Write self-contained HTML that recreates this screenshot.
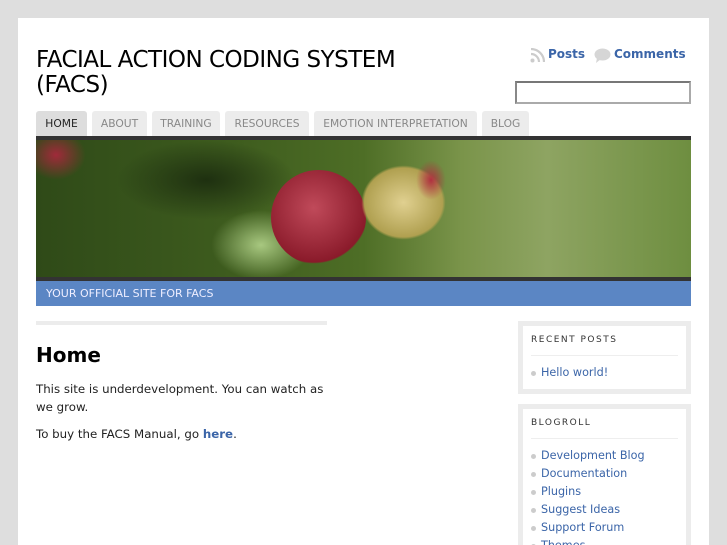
<!DOCTYPE html>
<html style="height:545px;overflow:hidden"><head><style>
*{margin:0;padding:0;box-sizing:border-box}
body{width:727px;height:545px;background:#dedede;font-family:"DejaVu Sans","Liberation Sans",sans-serif;overflow:hidden;position:relative}
#wrap{position:absolute;left:18px;top:18px;width:691px;height:527px;background:#fff}
.a{position:absolute}
h1{position:absolute;left:36px;top:48px;font-size:23px;font-weight:normal;line-height:25px;color:#000;letter-spacing:-0.5px;font-family:"DejaVu Sans",sans-serif}
.tab{position:absolute;top:111px;height:25px;background:#ececec;color:#888;font-size:10.7px;line-height:25px;text-align:center;border-radius:3px 3px 0 0}
a{color:#3b65a8;text-decoration:none}
.box{position:absolute;left:518px;width:173px;border:5px solid #ececec;background:#fff}
.box h3{font-size:9px;letter-spacing:1.5px;font-weight:normal;color:#333;margin:9px 8px 0;padding-bottom:10px;border-bottom:1px solid #eee}
.box ul{list-style:none;margin:8px 8px 0}
.box li{font-size:11.2px;line-height:18px;padding-left:10px;position:relative}
.box li:before{content:"";position:absolute;left:0;top:7px;width:5px;height:5px;border-radius:50%;background:#ccc}
</style></head><body>
<div id="wrap"></div>
<h1>FACIAL ACTION CODING SYSTEM<br>(FACS)</h1>
<svg class="a" style="left:530px;top:48px" width="15" height="15" viewBox="0 0 15 15"><circle cx="2.5" cy="12.5" r="2" fill="#ccc"/><path d="M1 6a8 8 0 0 1 8 8M1 1a13 13 0 0 1 13 13" stroke="#ccc" stroke-width="2.2" fill="none"/></svg>
<a class="a" style="left:548px;top:47px;font-size:12px;font-weight:bold">Posts</a>
<svg class="a" style="left:594px;top:48px" width="17" height="15" viewBox="0 0 17 15"><ellipse cx="8.5" cy="6.5" rx="8" ry="6" fill="#d6d6d6"/><path d="M3 10L2 15L7 11Z" fill="#d6d6d6"/></svg>
<a class="a" style="left:614px;top:47px;font-size:12px;font-weight:bold">Comments</a>
<div class="a" style="left:515px;top:81px;width:176px;height:23px;border:2px solid #aaa;border-top-color:#777;border-left-color:#888;background:#fff"></div>
<div class="tab" style="left:36px;width:51px;background:#ddd;color:#222">HOME</div>
<div class="tab" style="left:92px;width:55px">ABOUT</div>
<div class="tab" style="left:152px;width:68px">TRAINING</div>
<div class="tab" style="left:225px;width:84px">RESOURCES</div>
<div class="tab" style="left:314px;width:163px">EMOTION INTERPRETATION</div>
<div class="tab" style="left:482px;width:47px">BLOG</div>
<div class="a" style="left:36px;top:136px;width:655px;height:145px;background:#333"></div>
<div class="a" style="left:36px;top:140px;width:655px;height:137px;overflow:hidden;background:linear-gradient(90deg,#2f4a18 0%,#3e5c1e 30%,#4e6e26 50%,#7a944a 65%,#8ea462 78%,#6e8e40 100%)">
<div class="a" style="left:-10px;top:-10px;width:60px;height:50px;background:radial-gradient(#a02a3a,transparent 70%)"></div>
<div class="a" style="left:80px;top:0;width:180px;height:80px;background:radial-gradient(#1e3010,transparent 70%)"></div>
<div class="a" style="left:175px;top:70px;width:100px;height:70px;background:radial-gradient(#a8c880,transparent 70%)"></div>
<div class="a" style="left:235px;top:30px;width:95px;height:95px;border-radius:50%;background:radial-gradient(circle at 45% 40%,#c04a5a,#8a1a2a 70%,transparent 72%)"></div>
<div class="a" style="left:325px;top:25px;width:85px;height:75px;border-radius:50%;background:radial-gradient(#e0d090,#b0a050 65%,transparent 70%)"></div>
<div class="a" style="left:380px;top:20px;width:30px;height:40px;border-radius:50%;background:radial-gradient(#b03040,transparent 70%)"></div>
</div>
<div class="a" style="left:36px;top:281px;width:655px;height:25px;background:#5b86c4;color:#eef;font-size:11px;line-height:25px;padding-left:10px">YOUR OFFICIAL SITE FOR FACS</div>
<div class="a" style="left:36px;top:321px;width:291px;height:4px;background:#ececec"></div>
<div class="a" style="left:36px;top:343px;font-size:20px;font-weight:bold;color:#000">Home</div>
<div class="a" style="left:36px;top:380px;width:296px;font-size:11.8px;line-height:18px;color:#222">This site is underdevelopment. You can watch as we grow.</div>
<div class="a" style="left:36px;top:425px;font-size:11.8px;line-height:18px;color:#222">To buy the FACS Manual, go <a style="font-weight:bold">here</a>.</div>
<div class="box" style="top:321px;height:73px"><h3>RECENT POSTS</h3><ul><li><a>Hello world!</a></li></ul></div>
<div class="box" style="top:404px;height:160px"><h3>BLOGROLL</h3><ul><li><a>Development Blog</a></li><li><a>Documentation</a></li><li><a>Plugins</a></li><li><a>Suggest Ideas</a></li><li><a>Support Forum</a></li><li><a>Themes</a></li></ul></div>
</body></html>
